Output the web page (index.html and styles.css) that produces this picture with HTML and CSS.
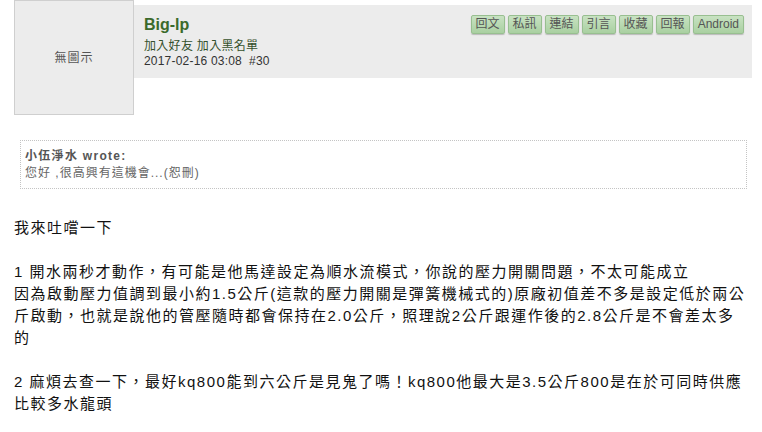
FILE: index.html
```html
<!DOCTYPE html>
<html>
<head>
    <title>Big-lp #30</title>
    <meta charset="utf-8">
    <link rel="stylesheet" href="styles.css">
</head>
<body>
    <div class="post">
        <!-- author row -->
        <div class="post-head">
            <div class="avatar">無圖示</div>
            <div class="info-bar">
                <div class="user">
                    <a href="#" class="name">Big-lp</a>
                    <div class="links"><a href="#">加入好友</a> <a href="#">加入黑名單</a></div>
                    <div class="meta">2017-02-16 03:08 &nbsp;#30</div>
                </div>
                <div class="actions">
                    <a href="#" class="btn">回文</a>
                    <a href="#" class="btn">私訊</a>
                    <a href="#" class="btn">連結</a>
                    <a href="#" class="btn">引言</a>
                    <a href="#" class="btn">收藏</a>
                    <a href="#" class="btn">回報</a>
                    <a href="#" class="btn">Android</a>
                </div>
            </div>
        </div>

        <!-- post body -->
        <div class="post-body">
            <div class="quote">
                <div class="quote-author">小伍淨水 wrote:</div>
                <div class="quote-text">您好 ,很高興有這機會...(恕刪)</div>
            </div>
            <div class="content">
                我來吐嚐一下<br><br>
                1 開水兩秒才動作，有可能是他馬達設定為順水流模式，你說的壓力開關問題，不太可能成立<br>
                因為啟動壓力值調到最小約1.5公斤(這款的壓力開關是彈簧機械式的)原廠初值差不多是設定低於兩公斤啟動，也就是說他的管壓隨時都會保持在2.0公斤，照理說2公斤跟運作後的2.8公斤是不會差太多的<br><br>
                2 麻煩去查一下，最好kq800能到六公斤是見鬼了嗎！kq800他最大是3.5公斤800是在於可同時供應比較多水龍頭
            </div>
        </div>
    </div>
</body>
</html>
```

FILE: styles.css
```css
body {
    margin: 0;
    background: #fff;
    font-family: "Liberation Sans", "Noto Sans CJK TC", sans-serif;
    color: #222;
}
a {
    text-decoration: none;
}
.post-head {
    display: flex;
    align-items: flex-start;
    padding: 0 10px 0 14px;
}
.avatar {
    width: 118px;
    height: 111px;
    background: #ececec;
    border: 1px solid #cfcfcf;
    display: flex;
    align-items: center;
    justify-content: center;
    padding-bottom: 2px;
    font-size: 12px;
    letter-spacing: 1px;
    color: #555;
}
.info-bar {
    flex: 1;
    display: flex;
    justify-content: space-between;
    align-items: flex-start;
    margin-top: 5px;
    height: 73px;
    box-sizing: border-box;
    padding: 10px 8px 0 10px;
    background: #ececec;
}
.name {
    display: block;
    font-size: 16px;
    font-weight: bold;
    color: #3b6a2b;
    line-height: 20px;
}
.links {
    font-size: 12px;
    line-height: 15px;
    margin-top: 4px;
    letter-spacing: 0.3px;
}
.links a {
    color: #35512c;
}
.meta {
    font-size: 12px;
    line-height: 15px;
    letter-spacing: 0.2px;
    color: #333;
}
.actions {
    display: flex;
    gap: 3px;
}
.btn {
    display: block;
    height: 17px;
    line-height: 17px;
    padding: 0 4px;
    font-size: 12px;
    color: #555;
    background: linear-gradient(#c8e2c2, #a9d0a1);
    border: 1px solid #98bf90;
    border-radius: 2px;
    box-shadow: 0 1px 1px #bbb;
}
.post-body {
    padding: 25px 10px 0 14px;
}
.quote {
    margin: 0 5px 0 6px;
    border: 1px dotted #c4c4c4;
    padding: 7px 5px 6px 4px;
    font-size: 12px;
    line-height: 17px;
    letter-spacing: 1px;
}
.quote-author {
    font-weight: bold;
    color: #555;
    letter-spacing: 1.3px;
}
.quote-text {
    color: #666;
}
.content {
    margin: 28px 5px 0 0;
    font-size: 15px;
    line-height: 22px;
    letter-spacing: 1.5px;
    color: #111;
}
```
